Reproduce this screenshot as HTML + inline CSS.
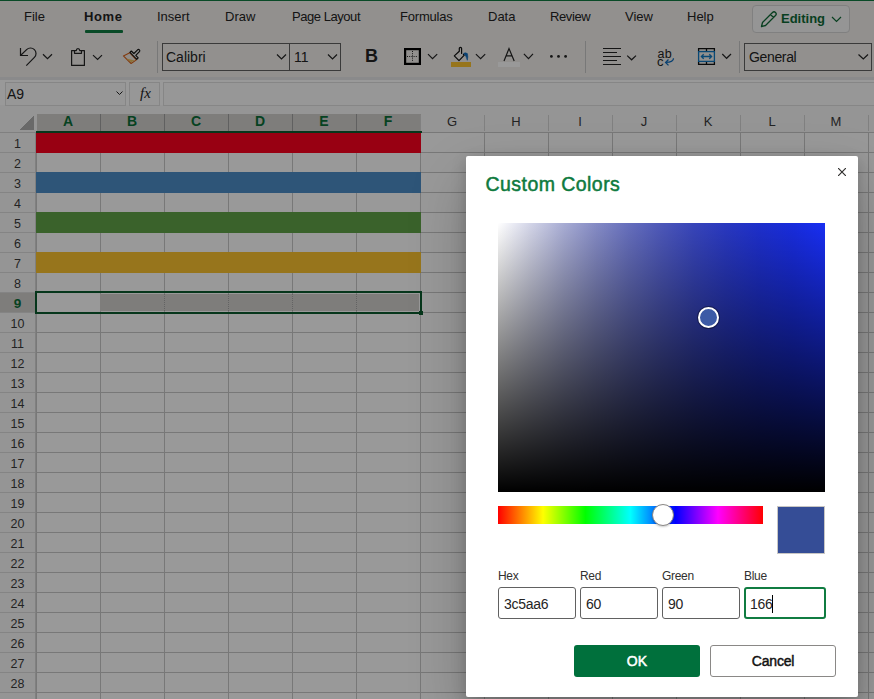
<!DOCTYPE html>
<html><head><meta charset="utf-8">
<style>
*{box-sizing:border-box;margin:0;padding:0}
html,body{width:874px;height:699px;overflow:hidden;background:#fff;font-family:"Liberation Sans",sans-serif;color:#242424}
.a{position:absolute}
#page{position:absolute;left:0;top:0;width:874px;height:699px;background:#fff}
.tab{position:absolute;top:9px;font-size:13px;line-height:16px;color:#242424;white-space:nowrap}
#overlay{position:absolute;left:0;top:0;width:874px;height:699px;background:rgba(0,0,0,0.4)}
#dlg{position:absolute;left:466px;top:156px;width:392px;height:541px;background:#fff;border-radius:2px;box-shadow:0 25.6px 57.6px rgba(0,0,0,.22),0 4.8px 14.4px rgba(0,0,0,.18)}
.lbl{position:absolute;top:413px;font-size:12px;line-height:14px;color:#323130;letter-spacing:-0.3px}
.inp{position:absolute;top:431px;height:32px;border:1px solid #616161;border-radius:3px;font-size:14px;line-height:31px;padding-top:1px;padding-left:5px;color:#242424;letter-spacing:-0.3px}
.btn{position:absolute;top:489px;width:126px;height:32px;border-radius:3px;font-size:14px;text-align:center;line-height:32px}
</style></head><body>
<div id="page">
  <svg class="a" style="left:0;top:0" width="874" height="699" shape-rendering="crispEdges" font-family="Liberation Sans, sans-serif"><rect x="0" y="105" width="874" height="594" fill="#ffffff"/>
<rect x="0" y="105" width="874" height="27" fill="#f9f9f9"/>
<rect x="0" y="105" width="36" height="594" fill="#f9f9f9"/>
<path d="M19 130H34V115Z" fill="#afafaf"/>
<rect x="37" y="114" width="384" height="17" fill="#d2d0ce"/>
<path d="M100.5 114V131M164.5 114V131M228.5 114V131M292.5 114V131M356.5 114V131" stroke="#a0a0a0" stroke-width="1"/>
<rect x="0" y="292" width="35" height="20" fill="#d2d0ce"/>
<path d="M36.5 132V699 M100.5 132V699 M164.5 132V699 M228.5 132V699 M292.5 132V699 M356.5 132V699 M420.5 132V699 M484.5 132V699 M548.5 132V699 M612.5 132V699 M676.5 132V699 M740.5 132V699 M804.5 132V699 M868.5 132V699 M36 132.5H874 M36 152.5H874 M36 172.5H874 M36 192.5H874 M36 212.5H874 M36 232.5H874 M36 252.5H874 M36 272.5H874 M36 292.5H874 M36 312.5H874 M36 332.5H874 M36 352.5H874 M36 372.5H874 M36 392.5H874 M36 412.5H874 M36 432.5H874 M36 452.5H874 M36 472.5H874 M36 492.5H874 M36 512.5H874 M36 532.5H874 M36 552.5H874 M36 572.5H874 M36 592.5H874 M36 612.5H874 M36 632.5H874 M36 652.5H874 M36 672.5H874 M36 692.5H874" stroke="#c8c8c8" stroke-width="1" fill="none"/>
<path d="M420.5 115V131 M484.5 115V131 M548.5 115V131 M612.5 115V131 M676.5 115V131 M740.5 115V131 M804.5 115V131 M868.5 115V131" stroke="#d6d6d6" stroke-width="1" fill="none"/>
<path d="M0 132.5H36M35.5 132V699" stroke="#d6d6d6" stroke-width="1"/>
<path d="M0 152.5H35 M0 172.5H35 M0 192.5H35 M0 212.5H35 M0 232.5H35 M0 252.5H35 M0 272.5H35 M0 292.5H35 M0 312.5H35 M0 332.5H35 M0 352.5H35 M0 372.5H35 M0 392.5H35 M0 412.5H35 M0 432.5H35 M0 452.5H35 M0 472.5H35 M0 492.5H35 M0 512.5H35 M0 532.5H35 M0 552.5H35 M0 572.5H35 M0 592.5H35 M0 612.5H35 M0 632.5H35 M0 652.5H35 M0 672.5H35 M0 692.5H35" stroke="#dcdcdc" stroke-width="1" fill="none"/>
<rect x="36" y="132" width="385" height="21" fill="#fd001e"/>
<rect x="36" y="172" width="385" height="21" fill="#4d8ec8"/>
<rect x="36" y="212" width="385" height="21" fill="#61a349"/>
<rect x="36" y="252" width="385" height="21" fill="#fcc32f"/>
<rect x="100" y="294" width="319" height="17" fill="#d2d0ce"/>
<path d="M164.5 294V311M228.5 294V311M292.5 294V311M356.5 294V311" stroke="#a6a6a6" stroke-width="1" stroke-dasharray="1 1"/>
<path d="M36 292H421V313H36Z" stroke="#0b5a2e" stroke-width="2" fill="none"/>
<rect x="419" y="311" width="4" height="4" fill="#0b5a2e"/>
<rect x="36" y="131" width="386" height="2" fill="#0b5a2e"/>
<text x="68" y="126" text-anchor="middle" font-size="14" font-weight="bold" fill="#0b6e37">A</text>
<text x="132" y="126" text-anchor="middle" font-size="14" font-weight="bold" fill="#0b6e37">B</text>
<text x="196" y="126" text-anchor="middle" font-size="14" font-weight="bold" fill="#0b6e37">C</text>
<text x="260" y="126" text-anchor="middle" font-size="14" font-weight="bold" fill="#0b6e37">D</text>
<text x="324" y="126" text-anchor="middle" font-size="14" font-weight="bold" fill="#0b6e37">E</text>
<text x="388" y="126" text-anchor="middle" font-size="14" font-weight="bold" fill="#0b6e37">F</text>
<text x="452" y="126" text-anchor="middle" font-size="13" fill="#3b3b3b">G</text>
<text x="516" y="126" text-anchor="middle" font-size="13" fill="#3b3b3b">H</text>
<text x="580" y="126" text-anchor="middle" font-size="13" fill="#3b3b3b">I</text>
<text x="644" y="126" text-anchor="middle" font-size="13" fill="#3b3b3b">J</text>
<text x="708" y="126" text-anchor="middle" font-size="13" fill="#3b3b3b">K</text>
<text x="772" y="126" text-anchor="middle" font-size="13" fill="#3b3b3b">L</text>
<text x="836" y="126" text-anchor="middle" font-size="13" fill="#3b3b3b">M</text>
<text x="17.5" y="148" text-anchor="middle" font-size="12.5" fill="#3b3b3b">1</text>
<text x="17.5" y="168" text-anchor="middle" font-size="12.5" fill="#3b3b3b">2</text>
<text x="17.5" y="188" text-anchor="middle" font-size="12.5" fill="#3b3b3b">3</text>
<text x="17.5" y="208" text-anchor="middle" font-size="12.5" fill="#3b3b3b">4</text>
<text x="17.5" y="228" text-anchor="middle" font-size="12.5" fill="#3b3b3b">5</text>
<text x="17.5" y="248" text-anchor="middle" font-size="12.5" fill="#3b3b3b">6</text>
<text x="17.5" y="268" text-anchor="middle" font-size="12.5" fill="#3b3b3b">7</text>
<text x="17.5" y="288" text-anchor="middle" font-size="12.5" fill="#3b3b3b">8</text>
<text x="17.5" y="308" text-anchor="middle" font-size="13.5" font-weight="bold" fill="#0b6e37">9</text>
<text x="17.5" y="328" text-anchor="middle" font-size="12.5" fill="#3b3b3b">10</text>
<text x="17.5" y="348" text-anchor="middle" font-size="12.5" fill="#3b3b3b">11</text>
<text x="17.5" y="368" text-anchor="middle" font-size="12.5" fill="#3b3b3b">12</text>
<text x="17.5" y="388" text-anchor="middle" font-size="12.5" fill="#3b3b3b">13</text>
<text x="17.5" y="408" text-anchor="middle" font-size="12.5" fill="#3b3b3b">14</text>
<text x="17.5" y="428" text-anchor="middle" font-size="12.5" fill="#3b3b3b">15</text>
<text x="17.5" y="448" text-anchor="middle" font-size="12.5" fill="#3b3b3b">16</text>
<text x="17.5" y="468" text-anchor="middle" font-size="12.5" fill="#3b3b3b">17</text>
<text x="17.5" y="488" text-anchor="middle" font-size="12.5" fill="#3b3b3b">18</text>
<text x="17.5" y="508" text-anchor="middle" font-size="12.5" fill="#3b3b3b">19</text>
<text x="17.5" y="528" text-anchor="middle" font-size="12.5" fill="#3b3b3b">20</text>
<text x="17.5" y="548" text-anchor="middle" font-size="12.5" fill="#3b3b3b">21</text>
<text x="17.5" y="568" text-anchor="middle" font-size="12.5" fill="#3b3b3b">22</text>
<text x="17.5" y="588" text-anchor="middle" font-size="12.5" fill="#3b3b3b">23</text>
<text x="17.5" y="608" text-anchor="middle" font-size="12.5" fill="#3b3b3b">24</text>
<text x="17.5" y="628" text-anchor="middle" font-size="12.5" fill="#3b3b3b">25</text>
<text x="17.5" y="648" text-anchor="middle" font-size="12.5" fill="#3b3b3b">26</text>
<text x="17.5" y="668" text-anchor="middle" font-size="12.5" fill="#3b3b3b">27</text>
<text x="17.5" y="688" text-anchor="middle" font-size="12.5" fill="#3b3b3b">28</text></svg>
  <!-- top green line -->
  <div class="a" style="left:0;top:0;width:874px;height:1px;background:#107c41"></div>
  <!-- ribbon -->
  <div class="a" style="left:0;top:1px;width:874px;height:77px;background:#f3f0ed"></div>
  <div class="tab" style="left:24px">File</div>
  <div class="tab" style="left:84px;font-weight:bold;letter-spacing:0.6px">Home</div>
  <div class="a" style="left:85px;top:30px;width:38px;height:3px;background:#107c41;border-radius:1px"></div>
  <div class="tab" style="left:157px">Insert</div>
  <div class="tab" style="left:225px">Draw</div>
  <div class="tab" style="left:292px;letter-spacing:-0.45px">Page Layout</div>
  <div class="tab" style="left:400px;letter-spacing:-0.2px">Formulas</div>
  <div class="tab" style="left:488px">Data</div>
  <div class="tab" style="left:550px;letter-spacing:-0.4px">Review</div>
  <div class="tab" style="left:625px">View</div>
  <div class="tab" style="left:687px">Help</div>
  <!-- Editing button -->
  <div class="a" style="left:752px;top:5px;width:98px;height:28px;border:1px solid #d6d6d6;border-radius:4px;background:#f8f8f8"></div>
  <svg class="a" style="left:760px;top:11px" width="18" height="17" viewBox="0 0 18 17"><path d="M1.5 15.5L2.5 11.5L12.5 1.5A1.6 1.6 0 0 1 15.5 4.5L5.5 14.5Z M10.5 3.5L13.5 6.5" stroke="#0e6a36" stroke-width="1.3" fill="none" stroke-linejoin="round"/></svg>
  <div class="tab" style="left:781px;top:11px;font-weight:bold;color:#0e6a36">Editing</div>
  <svg class="a" style="left:831px;top:16px" width="11" height="7"><path d="M1 1L5.5 5.5L10 1" stroke="#0e6a36" stroke-width="1.2" fill="none"/></svg>

  <!-- ribbon icons -->
  <svg class="a" style="left:0;top:40px" width="874" height="36" viewBox="0 40 874 36" fill="none" stroke="#242424" stroke-width="1.2">
    <!-- undo -->
    <path d="M20.5 48V55.5H28M20.8 55.2L26.6 49.6A5.5 5.5 0 0 1 34.4 57.4L26.3 65.6"/>
    <path d="M43 54.3L47.5 58.6L52 54.3"/>
    <!-- clipboard -->
    <path d="M74.5 50.6H71.6V65.4H84.4V50.6H81.5M74.5 53.3H81.5V50.6H79.7A1.7 2 0 0 0 76.3 50.6H74.5Z" stroke-linejoin="round"/>
    <path d="M93 55.1L97.6 59.4L102 55.1"/>
    <!-- format painter -->
    <path d="M129.8 52.8L123.4 55.9L131.1 63.5L136.4 59.9Z" fill="#f2ece6" stroke="#d9631a" stroke-width="1.1" stroke-linejoin="round"/>
    <path d="M126.2 58.6L131.1 62.6L134.6 60.2L129.6 59.2Z" fill="#eabf62" stroke="none"/>
    <path d="M129.9 52.4L131.3 51L133.9 53.5L137.6 49.8A1.35 1.35 0 0 1 139.5 51.7L135.8 55.4L138.2 57.9L136.8 59.3Z" fill="#e4e4e4" stroke="#111" stroke-width="1.1" stroke-linejoin="round"/>
    <!-- separators -->
    <path d="M157.5 41V73M585.5 41V73M739.5 41V73" stroke="#c8c8c8" stroke-width="1"/>
    <!-- border icon -->
    <rect x="405.1" y="49.1" width="14.8" height="14.8" stroke="#000" stroke-width="2.2"/>
    <path d="M412.5 51V62M407 56.5H418" stroke-width="1" stroke-dasharray="1 1.2"/>
    <path d="M428 54.1L432.5 58.6L437.2 54.1"/>
    <!-- fill icon -->
    <path d="M461.6 53.4V48.6A1.15 1.15 0 0 0 459.3 48.6V51.2L454.3 55.9L459 60.6L464.3 55.2L463.4 54.3" stroke="#111" stroke-width="1.2" stroke-linejoin="round" stroke-linecap="round"/>
    <path d="M463.6 53.3Q465.5 52.3 467.4 53.6Q468.3 56.5 467.3 60.3Q466.6 56.5 463.6 53.3Z" fill="#0f6cbd" stroke="#0f6cbd" stroke-width="0.6"/>
    <rect x="451" y="62" width="20" height="5" fill="#fcc32f" stroke="none"/>
    <path d="M475.9 54.1L480.6 58.6L485.2 54.1"/>
    <!-- font color -->
    <path d="M504 61L509 48.5L514.2 61M506 55.8H512.2"/>
    <rect x="498" y="62" width="22" height="5" fill="#ffffff" stroke="none"/>
    <path d="M523.9 53.9L528.5 58.7L533 53.9"/>
    <circle cx="551.4" cy="56.4" r="1.4" fill="#242424" stroke="none"/>
    <circle cx="558.5" cy="56.4" r="1.4" fill="#242424" stroke="none"/>
    <circle cx="565.6" cy="56.4" r="1.4" fill="#242424" stroke="none"/>
    <!-- align -->
    <path d="M603 48.5H621M603 52.5H617M603 56.5H621M603 60.5H617M603 64.5H621" stroke-width="1.1"/>
    <path d="M627.2 55.6L631.6 59.8L636 55.6"/>
    <!-- wrap -->
    <path d="M673.5 58.3Q673.5 62.4 665.8 62.4M668.5 59.5L665.6 62.4L668.5 65.4" stroke="#0f6cbd" stroke-width="1.3"/>
    <!-- merge -->
    <path d="M698.6 51.5V48.6H714.4V51.5M698.6 61.5V64.4H714.4V61.5M706.5 48.6V51.5M706.5 61.5V64.4" stroke="#111" stroke-width="1.3"/>
    <rect x="698.6" y="51.6" width="15.8" height="9.8" stroke="#0f78c4" stroke-width="1.3"/>
    <path d="M701.6 56.5H711.4M703.7 54.2L701.4 56.5L703.7 58.8M709.3 54.2L711.6 56.5L709.3 58.8" stroke="#0f78c4" stroke-width="1.3"/>
    <path d="M722.3 54L726.6 58.3L731 54"/>
    <!-- font box / size / general -->
    <rect x="162.5" y="43.5" width="127" height="27" stroke="#616161" stroke-width="1"/>
    <rect x="289.5" y="43.5" width="51" height="27" stroke="#616161" stroke-width="1"/>
    <rect x="744.5" y="43.5" width="127" height="27" stroke="#616161" stroke-width="1"/>
    <path d="M277 54.5L281.5 59L286 54.5M328 54.5L332.5 59L337 54.5M858.5 54.5L863.3 59L868 54.5"/>
  </svg>
  <div class="a" style="left:166px;top:49px;font-size:14px;line-height:16px;color:#242424">Calibri</div>
  <div class="a" style="left:294px;top:49px;font-size:14px;line-height:16px;color:#242424">11</div>
  <div class="a" style="left:749px;top:49px;font-size:14px;line-height:16px;color:#242424;letter-spacing:-0.35px">General</div>
  <div class="a" style="left:365px;top:46px;font-size:18px;line-height:20px;font-weight:bold;color:#242424">B</div>
  <div class="a" style="left:657.5px;top:47.5px;font-size:12.5px;line-height:13px;color:#242424;letter-spacing:0.3px">ab</div>
  <div class="a" style="left:657px;top:55px;font-size:13px;line-height:13px;color:#242424">c</div>

  <!-- ribbon bottom band -->
  <div class="a" style="left:0;top:77px;width:874px;height:3px;background:#e6e6e8"></div>
  <!-- formula bar -->
  <div class="a" style="left:0;top:80px;width:874px;height:25px;background:#ffffff"></div>
  <div class="a" style="left:5px;top:82px;width:121px;height:24px;border:1px solid #e0e0e0;background:#fcfcfc"></div>
  <div class="a" style="left:7px;top:86px;font-size:14px;line-height:16px;color:#242424">A9</div>
  <svg class="a" style="left:116px;top:91px" width="7" height="5"><path d="M0.5 0.5L3.5 3.5L6.5 0.5" stroke="#242424" stroke-width="1" fill="none"/></svg>
  <div class="a" style="left:129px;top:82px;width:31px;height:24px;border:1px solid #e0e0e0;background:#fcfcfc"></div>
  <div class="a" style="left:140px;top:85px;font-family:'Liberation Serif',serif;font-style:italic;font-size:15px;line-height:17px;color:#242424">fx</div>
  <div class="a" style="left:163px;top:82px;width:720px;height:24px;border:1px solid #e0e0e0;background:#fcfcfc"></div>
</div>
<div id="overlay"></div>
<div id="dlg">
  <div class="a" style="left:19.5px;top:16px;font-size:19.5px;line-height:24px;color:#0e7a3e;-webkit-text-stroke:0.5px #0e7a3e;letter-spacing:0.45px">Custom Colors</div>
  <svg class="a" style="left:372px;top:12px" width="8" height="8"><path d="M0 0L8 8M8 0L0 8" stroke="#323130" stroke-width="1.2"/></svg>
  <div class="a" style="left:32px;top:67px;width:327px;height:269px;background:linear-gradient(to bottom,rgba(0,0,0,0),#000),linear-gradient(to right,rgba(255,255,255,1.00) 0%,rgba(230,230,230,0.90) 10%,rgba(204,204,204,0.80) 20%,rgba(178,178,178,0.70) 30%,rgba(153,153,153,0.60) 40%,rgba(128,128,128,0.50) 50%,rgba(102,102,102,0.40) 60%,rgba(77,77,77,0.30) 70%,rgba(51,51,51,0.20) 80%,rgba(25,25,25,0.10) 90%,rgba(0,0,0,0.00) 100%),rgb(24,46,242)"></div>
  <div class="a" style="left:232px;top:151px;width:21px;height:21px;border:2px solid #fff;border-radius:50%;background:#3c5aa6;box-shadow:0 0 0 1px rgba(0,0,0,.35)"></div>
  <div class="a" style="left:32px;top:350px;width:265px;height:18px;background:linear-gradient(to right,#f00 0%,#ff0 17%,#0f0 33%,#0ff 50%,#00f 67%,#f0f 83%,#f00 100%)"></div>
  <div class="a" style="left:186px;top:348px;width:22px;height:22px;border-radius:50%;background:#fff;border:1px solid #8a8886;box-shadow:0 1px 2px rgba(0,0,0,.2)"></div>
  <div class="a" style="left:311px;top:350px;width:48px;height:48px;background:#354d96;border:1px solid #c8c6c4"></div>
  <div class="lbl" style="left:32px">Hex</div>
  <div class="lbl" style="left:114px">Red</div>
  <div class="lbl" style="left:196px">Green</div>
  <div class="lbl" style="left:278px">Blue</div>
  <div class="inp" style="left:32px;width:78px">3c5aa6</div>
  <div class="inp" style="left:114px;width:78px">60</div>
  <div class="inp" style="left:196px;width:78px">90</div>
  <div class="inp" style="left:278px;width:82px;border:2px solid #107c41;padding-left:4px;line-height:29px">166<span style="display:inline-block;width:1px;height:18px;background:#000;vertical-align:-4px"></span></div>
  <div class="btn" style="left:108px;background:#00703c;color:#fff;-webkit-text-stroke:0.5px #fff;letter-spacing:0.2px">OK</div>
  <div class="btn" style="left:244px;background:#fff;border:1px solid #8a8886;line-height:30px;color:#111;-webkit-text-stroke:0.45px #111;letter-spacing:-0.2px">Cancel</div>
</div>
</body></html>
